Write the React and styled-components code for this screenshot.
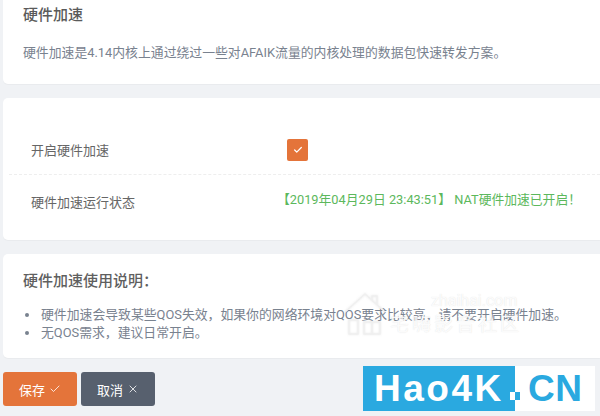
import React from 'react';
import styled, { createGlobalStyle } from 'styled-components';
import { Check, X } from 'lucide-react';

const FONT = `Roboto, "Noto Sans CJK SC", sans-serif`;

export default function App() {
    return (
        <Page>
            <GlobalStyle />
            <IntroCard>
                <IntroTitle>硬件加速</IntroTitle>
                <IntroText>硬件加速是4.14内核上通过绕过一些对AFAIK流量的内核处理的数据包快速转发方案。</IntroText>
            </IntroCard>
            <FormCard>
                <FormRow>
                    <RowLabel>开启硬件加速</RowLabel>
                    <CheckBox>
                        <Check size={10} strokeWidth={3} color="#fff" />
                    </CheckBox>
                </FormRow>
                <FormRow $last>
                    <RowLabel>硬件加速运行状态</RowLabel>
                    <Status>【2019年04月29日 23:43:51】 NAT硬件加速已开启！</Status>
                </FormRow>
            </FormCard>
            <NoteCard>
                <NoteTitle>硬件加速使用说明：</NoteTitle>
                <NoteList>
                    <li>硬件加速会导致某些QOS失效，如果你的网络环境对QOS要求比较高，请不要开启硬件加速。</li>
                    <li>无QOS需求，建议日常开启。</li>
                </NoteList>
            </NoteCard>
            <Footer>
                <Button $bg="#e4743a">
                    保存 <Check size={12} strokeWidth={1.6} />
                </Button>
                <Button $bg="#57606e">
                    取消 <X size={12} strokeWidth={1.6} />
                </Button>
            </Footer>
            <Watermark>
                <WatermarkHouse width="42" height="44" viewBox="0 0 42 44" fill="none">
                    <path d="M1 20 L21 2 L41 20" />
                    <path d="M28 8 V4 H33 V13" />
                    <path d="M5 28 V42 H14 V28 Z M20 30 H36 V42 H20 Z M28 30 V42" />
                </WatermarkHouse>
                <WatermarkText>
                    <WatermarkUrl>zhaihai.com</WatermarkUrl>
                    <WatermarkName>宅嗨影音社区</WatermarkName>
                </WatermarkText>
            </Watermark>
            <Logo>
                <LogoBlue>Hao4K</LogoBlue>
                <LogoWhite>CN</LogoWhite>
                <LogoDot />
            </Logo>
        </Page>
    );
}

const GlobalStyle = createGlobalStyle`
    html, body {
        margin: 0;
        padding: 0;
        background: #f0f2f5;
    }
`;

const Page = styled.div`
    position: relative;
    width: 600px;
    height: 416px;
    overflow: hidden;
    box-sizing: border-box;
    padding-left: 3px;
    font-family: ${FONT};
    background: #f0f2f5;
`;

const Card = styled.div`
    box-sizing: border-box;
    background: #fff;
    border-radius: 5px 0 0 5px;
    box-shadow: 0 1px 1px rgba(0, 0, 0, 0.03);
`;

const IntroCard = styled(Card)`
    height: 84px;
    padding: 5px 0 0 20px;
    border-top-left-radius: 0;
`;

const IntroTitle = styled.div`
    font-size: 15px;
    line-height: 20px;
    font-weight: 500;
    color: #5a5a5a;
`;

const IntroText = styled.div`
    margin-top: 19px;
    font-size: 12.85px;
    line-height: 18px;
    color: #79828f;
`;

const FormCard = styled(Card)`
    height: 142px;
    margin-top: 14px;
    padding: 27px 0 0 6px;
`;

const FormRow = styled.div`
    display: flex;
    align-items: center;
    height: 49px;
    border-bottom: ${(p) => (p.$last ? 'none' : '1px dashed #eeeeee')};
    margin-top: ${(p) => (p.$last ? '2px' : '0')};
`;

const RowLabel = styled.div`
    width: 256px;
    padding-left: 22px;
    box-sizing: border-box;
    font-size: 13px;
    color: #666;
`;

const CheckBox = styled.div`
    display: flex;
    align-items: center;
    justify-content: center;
    width: 21px;
    height: 22px;
    margin-left: 22px;
    border-radius: 2px;
    background: #e4743a;
`;

const Status = styled.div`
    margin: -6px 0 0 12px;
    font-size: 12.8px;
    white-space: nowrap;
    color: #5cb85c;
`;

const NoteCard = styled(Card)`
    height: 104px;
    margin-top: 14px;
    padding: 17px 0 0 20px;
`;

const NoteTitle = styled.div`
    font-size: 15px;
    line-height: 20px;
    font-weight: 500;
    color: #5f5f5f;
`;

const NoteList = styled.ul`
    margin: 15px 0 0;
    padding: 0 0 0 18px;
    list-style: none;
    font-size: 12.85px;
    line-height: 18px;
    color: #79828f;
    & li {
        position: relative;
        white-space: nowrap;
    }
    & li::before {
        content: '';
        position: absolute;
        left: -16px;
        top: 7px;
        width: 4px;
        height: 4px;
        border-radius: 50%;
        background: #79828f;
    }
`;

const Footer = styled.div`
    display: flex;
    gap: 4px;
    margin-top: 14px;
`;

const Button = styled.div`
    display: flex;
    align-items: center;
    justify-content: center;
    gap: 4px;
    width: 74px;
    height: 34px;
    border-radius: 3px;
    font-size: 13px;
    color: #fff;
    background: ${(p) => p.$bg};
`;

const Watermark = styled.div`
    position: absolute;
    left: 344px;
    top: 292px;
    display: flex;
    align-items: flex-end;
    gap: 4px;
    color: rgba(255, 255, 255, 0.9);
`;

const WatermarkHouse = styled.svg`
    stroke: #f0f0f0;
    stroke-width: 1.6;
    filter: drop-shadow(0 0 1px rgba(150, 150, 150, 0.2));
`;

const WatermarkText = styled.div`
    text-shadow: 0 0 1px rgba(150, 150, 150, 0.3);
`;

const WatermarkUrl = styled.div`
    margin-left: 41px;
    font-size: 16px;
    line-height: 16px;
    margin-bottom: 5px;
`;

const WatermarkName = styled.div`
    font-size: 19px;
    line-height: 22px;
    letter-spacing: 3px;
    white-space: nowrap;
`;

const Logo = styled.div`
    position: absolute;
    left: 363px;
    top: 366px;
    display: flex;
    height: 45px;
    font-family: "Liberation Sans", sans-serif;
    font-weight: 700;
    font-size: 37px;
    line-height: 45px;
    letter-spacing: 2.5px;
`;

const LogoBlue = styled.div`
    box-sizing: border-box;
    width: 152px;
    padding-left: 11px;
    color: #fff;
    background: #2aa9e0;
`;

const LogoWhite = styled.div`
    box-sizing: border-box;
    width: 80px;
    padding-left: 13px;
    letter-spacing: 0.5px;
    color: #2aa9e0;
    background: #fff;
`;

const LogoDot = styled.div`
    position: absolute;
    left: 147px;
    top: 26px;
    width: 10px;
    height: 8px;
    background: linear-gradient(90deg, #fff 50%, #2aa9e0 50%);
`;
